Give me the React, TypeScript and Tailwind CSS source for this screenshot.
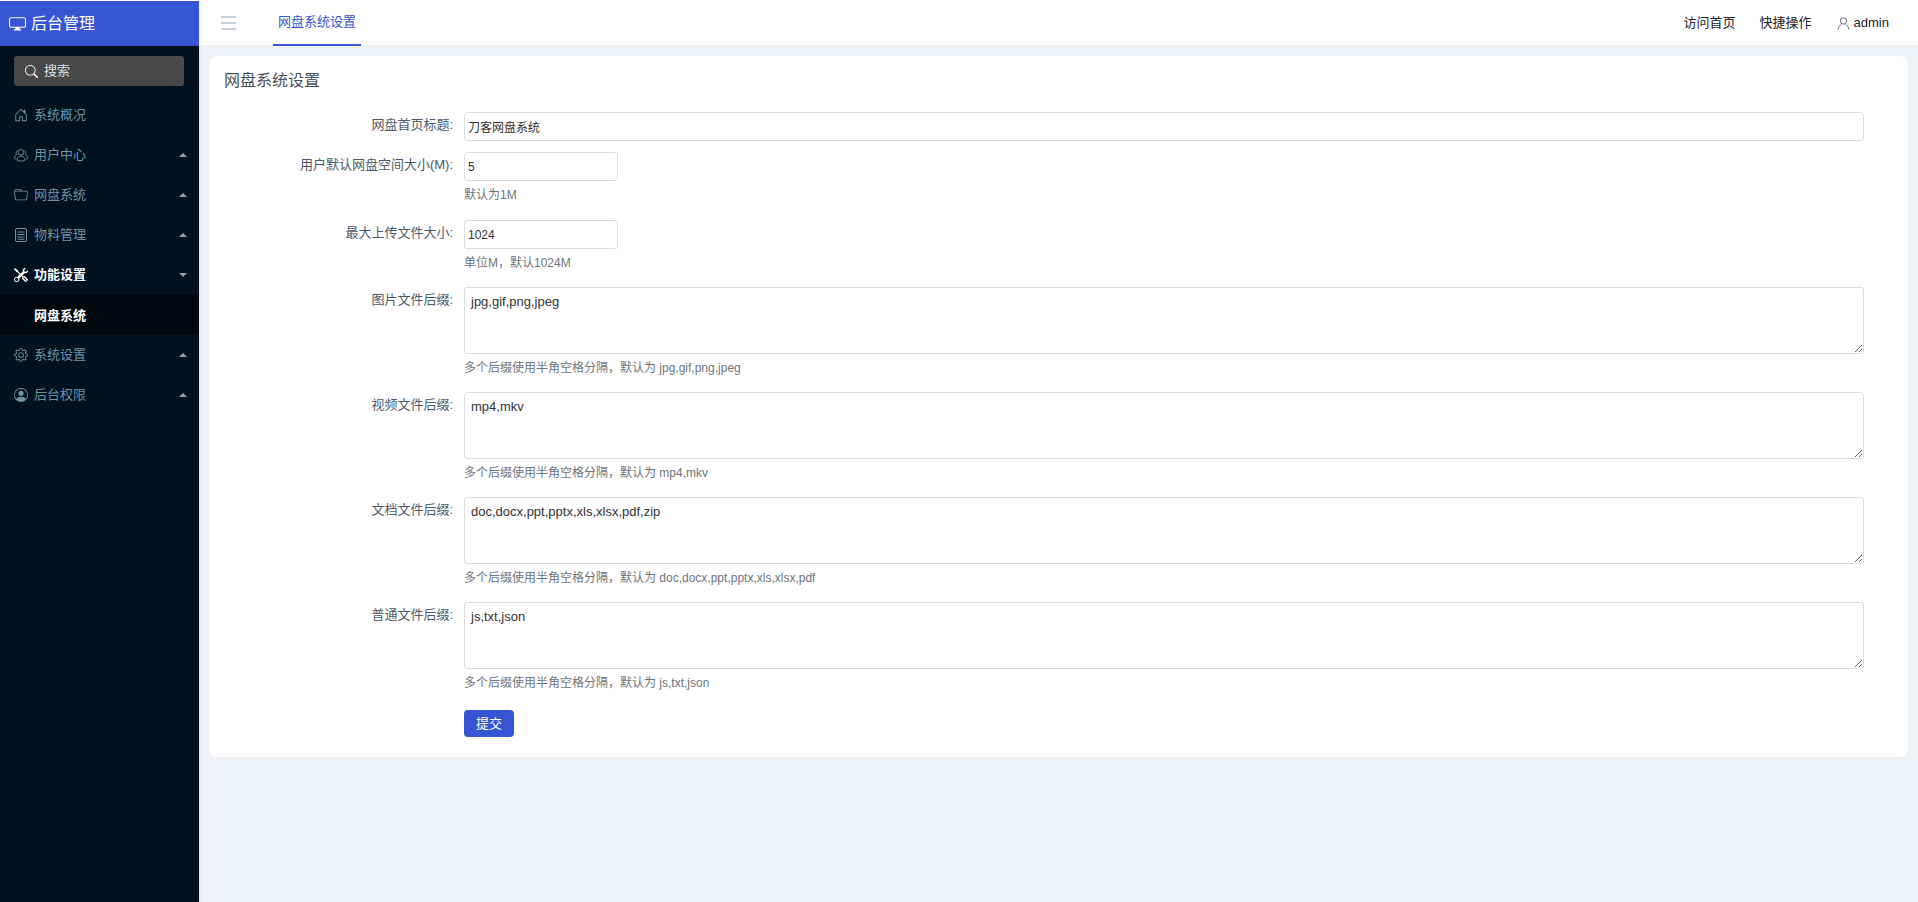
import React from "react";
import { BsHouseDoor, BsFolder, BsTools, BsGear, BsPersonCircle, BsDisplay, BsSearch } from "react-icons/bs";

function ListDoc({ className }: { className?: string }) {
  return (
    <svg viewBox="0 0 14 14" width="14" height="14" fill="none" stroke="currentColor" strokeWidth="1" className={className}>
      <rect x="1.5" y="0.5" width="11" height="13" rx="1.5" />
      <path d="M3.5 4h7M3.5 6.5h7M3.5 9h7M3.5 11.2h7" />
    </svg>
  );
}

function Team({ className }: { className?: string }) {
  return (
    <svg viewBox="0 0 14 14" width="14" height="14" fill="none" stroke="currentColor" strokeWidth="0.9" className={className}>
      <circle cx="7" cy="4.3" r="2.8" />
      <path d="M3 12.2c0-2.4 1.6-4 4-4s4 1.6 4 4c-2.4 1.2-5.6 1.2-8 0z" />
      <path d="M3.6 2.6C2 3 1.6 5.2 2.8 6.3 1.2 7 .4 8.6.5 10.4c.5.4 1 .6 1.6.8M10.4 2.6c1.6.4 2 2.6.8 3.7 1.6.7 2.4 2.3 2.3 4.1-.5.4-1 .6-1.6.8" />
    </svg>
  );
}

function UserThin({ className }: { className?: string }) {
  return (
    <svg viewBox="0 0 13 13" width="13" height="13" fill="none" stroke="currentColor" strokeWidth="0.9" className={className}>
      <circle cx="6.5" cy="4" r="3.2" />
      <path d="M1 12.6c.4-3 2.3-4.6 3.4-5.3M12 12.6c-.4-3-2.3-4.6-3.4-5.3" />
    </svg>
  );
}

const menu: { label: string; Icon?: React.ComponentType<{ className?: string; size?: number }>; caret?: string; active?: boolean; sub?: boolean }[] = [
  { label: "系统概况", Icon: BsHouseDoor },
  { label: "用户中心", Icon: Team, caret: "up" },
  { label: "网盘系统", Icon: BsFolder, caret: "up" },
  { label: "物料管理", Icon: ListDoc, caret: "up" },
  { label: "功能设置", Icon: BsTools, caret: "down", active: true },
  { label: "网盘系统", sub: true },
  { label: "系统设置", Icon: BsGear, caret: "up" },
  { label: "后台权限", Icon: BsPersonCircle, caret: "up" },
];

function Sidebar() {
  return (
    <aside className="relative z-10 w-[199px] shrink-0 bg-[#001120] flex flex-col min-h-[902px] shadow-[0_0_4px_rgba(0,0,0,0.12)]">
      <div className="h-[46px] bg-[#3755d2] border-t border-white flex items-center pl-[9px] gap-[5px] text-white text-[16px]">
        <BsDisplay size={17} />
        <span>后台管理</span>
      </div>
      <div className="px-[14px] pt-[10px] pb-[9px]">
        <div className="h-[30px] w-[170px] bg-[#484848] rounded-[3px] flex items-center pl-[11px] gap-[6px] text-[#d4dde3] text-[13px]">
          <BsSearch size={13} className="text-white" />
          <span>搜索</span>
        </div>
      </div>
      {menu.map((m, i) =>
        m.sub ? (
          <div key={i} className="h-[40px] bg-[#00080e] flex items-center pl-[34px] pt-[1px] text-white text-[13px] font-bold">
            {m.label}
          </div>
        ) : (
          <div
            key={i}
            className={
              m.active
                ? "h-[40px] flex items-center pl-[14px] pr-[12px] text-white text-[13px] font-bold"
                : "h-[40px] flex items-center pl-[14px] pr-[12px] text-[#6d93a6] text-[13px]"
            }
          >
            {m.Icon && <m.Icon size={14} className="w-[14px] mr-[6px]" />}
            <span className="flex-1">{m.label}</span>
            {m.caret === "up" && (
              <span className="w-0 h-0 border-x-[4px] border-x-transparent border-b-[4px] border-b-[#8fa3ae]" />
            )}
            {m.caret === "down" && (
              <span className="w-0 h-0 border-x-[4px] border-x-transparent border-t-[4px] border-t-[#8fa3ae]" />
            )}
          </div>
        )
      )}
    </aside>
  );
}

function Header() {
  return (
    <header className="h-[45px] bg-white flex items-stretch text-[13px]">
      <div className="w-[74px] flex items-center pl-[22px] pt-[1px]">
        <div className="w-[15px] flex flex-col gap-[4px]">
          <span className="h-[2px] bg-[#c8d2de] block" />
          <span className="h-[2px] bg-[#c8d2de] block" />
          <span className="h-[2px] bg-[#c8d2de] block" />
        </div>
      </div>
      <div className="w-[88px] h-[46px] flex items-center justify-center text-[#3755d2] border-b-2 border-[#3755d2]">
        网盘系统设置
      </div>
      <div className="flex-1" />
      <div className="flex items-center pt-[1px] pr-[29px] text-[#222]">
        <span>访问首页</span>
        <span className="ml-[24px]">快捷操作</span>
        <UserThin className="ml-[25px] mr-[4px] text-[#555]" />
        <span>admin</span>
      </div>
    </header>
  );
}

const fieldCls =
  "block border border-[#dedede] rounded-[3px] bg-white text-[#333] outline-none";

function Row({ label, help, children, mb }: { label: string; help?: string; children: React.ReactNode; mb: string }) {
  return (
    <div className={"flex " + mb}>
      <label className="w-[229px] shrink-0 text-right pt-[4px] leading-[18px] text-[13px] text-[#4c5a68]">
        {label}
      </label>
      <div className="ml-[11px] flex-1 min-w-0">
        {children}
        {help && <div className="mt-[5px] h-[18px] leading-[18px] text-[12px] text-[#6c757d]">{help}</div>}
      </div>
    </div>
  );
}

const areas = [
  { label: "图片文件后缀:", value: "jpg,gif,png,jpeg", help: "多个后缀使用半角空格分隔，默认为 jpg,gif,png,jpeg" },
  { label: "视频文件后缀:", value: "mp4,mkv", help: "多个后缀使用半角空格分隔，默认为 mp4,mkv" },
  { label: "文档文件后缀:", value: "doc,docx,ppt,pptx,xls,xlsx,pdf,zip", help: "多个后缀使用半角空格分隔，默认为 doc,docx,ppt,pptx,xls,xlsx,pdf" },
  { label: "普通文件后缀:", value: "js,txt,json", help: "多个后缀使用半角空格分隔，默认为 js,txt,json" },
];

function Card() {
  return (
    <div className="mx-[10px] mt-[11px] bg-white rounded-[8px] h-[701px] pt-[15px] pl-[15px] pr-[44px]">
      <h1 className="text-[16px] leading-[20px] text-[#47515c] font-normal">网盘系统设置</h1>
      <div className="mt-[21px]">
        <Row label="网盘首页标题:" mb="mb-[11px]">
          <input className={fieldCls + " w-full h-[29px] px-[3px] text-[12px]"} defaultValue="刀客网盘系统" />
        </Row>
        <Row label="用户默认网盘空间大小(M):" help="默认为1M" mb="mb-[16px]">
          <input className={fieldCls + " w-[154px] h-[29px] px-[3px] text-[12px]"} defaultValue="5" />
        </Row>
        <Row label="最大上传文件大小:" help="单位M，默认1024M" mb="mb-[15px]">
          <input className={fieldCls + " w-[154px] h-[29px] px-[3px] text-[12px]"} defaultValue="1024" />
        </Row>
        {areas.map((a) => (
          <Row key={a.label} label={a.label} help={a.help} mb="mb-[15px]">
            <textarea className={fieldCls + " w-full h-[67px] px-[6px] py-[5px] leading-[18px] text-[13px]"} defaultValue={a.value} />
          </Row>
        ))}
        <div className="pl-[240px] mt-[18px]">
          <button className="w-[50px] h-[27px] bg-[#3755d2] text-white text-[13px] rounded-[4px]">提交</button>
        </div>
      </div>
    </div>
  );
}

export default function App() {
  return (
    <div
      className="flex h-[902px] overflow-hidden bg-[#eef1f5]"
      style={{ fontFamily: '"Liberation Sans", "Noto Sans CJK SC", sans-serif' }}
    >
      <Sidebar />
      <main className="flex-1 min-w-0">
        <Header />
        <Card />
      </main>
    </div>
  );
}
